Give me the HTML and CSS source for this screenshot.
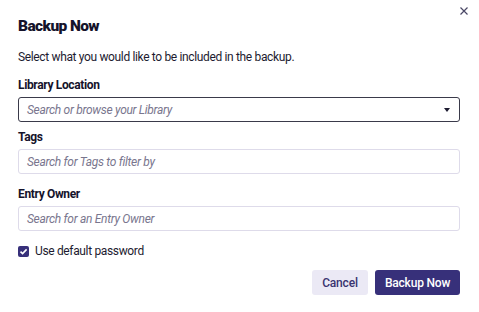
FILE: index.html
```html
<!DOCTYPE html>
<html>
<head>
<meta charset="utf-8">
<link rel="stylesheet" href="styles.css">
</head>
<body>
<div class="dialog">
  <button class="close" aria-label="Close">
    <svg width="8" height="8" viewBox="0 0 8 8"><path d="M0.5 0.5 L7.5 7.5 M7.5 0.5 L0.5 7.5" stroke="#4a4866" stroke-width="1.2"/></svg>
  </button>
  <h2 class="title">Backup Now</h2>
  <p class="desc">Select what you would like to be included in the backup.</p>

  <label class="label lbl-first">Library Location</label>
  <div class="field field-select">
    <span class="ph">Search or browse your Library</span>
    <span class="caret"></span>
  </div>

  <label class="label lbl-tags">Tags</label>
  <div class="field">
    <span class="ph">Search for Tags to filter by</span>
  </div>

  <label class="label lbl-owner">Entry Owner</label>
  <div class="field">
    <span class="ph">Search for an Entry Owner</span>
  </div>

  <div class="check-row">
    <span class="checkbox">
      <svg width="11" height="11" viewBox="0 0 11 11"><path d="M2.5 5.6 L4.6 7.6 L8.6 3.4" fill="none" stroke="#fff" stroke-width="1.6"/></svg>
    </span>
    <span class="check-text">Use default password</span>
  </div>

  <div class="actions">
    <button class="btn btn-cancel">Cancel</button>
    <button class="btn btn-primary">Backup Now</button>
  </div>
</div>
</body>
</html>
```
FILE: styles.css
```css
* { box-sizing: border-box; }
html, body { margin: 0; padding: 0; background: #fff; }
body {
  font-family: Roboto, "Noto Sans", sans-serif;
  color: #1d1b30;
  width: 479px;
  height: 312px;
  overflow: hidden;
  letter-spacing: -0.35px;
}
.dialog {
  position: relative;
  padding: 16px 19px 0 18px;
  display: flex;
  flex-direction: column;
}
.close {
  position: absolute;
  top: 4px;
  right: 8px;
  width: 14px;
  height: 14px;
  padding: 0;
  border: 0;
  background: none;
  display: flex;
  align-items: center;
  justify-content: center;
}
.title {
  margin: 0;
  font-size: 15.5px;
  line-height: 20px;
  font-weight: 900;
  letter-spacing: -0.6px;
  color: #15132b;
}
.desc {
  margin: 12px 0 0;
  font-size: 12px;
  line-height: 18px;
}
.label {
  display: block;
  font-size: 12px;
  line-height: 16px;
  font-weight: 700;
  color: #15132b;
}
.lbl-first { margin-top: 11px; }
.lbl-tags { margin-top: 7px; }
.lbl-owner { margin-top: 12px; }
.field {
  margin-top: 4px;
  height: 25px;
  border: 1px solid #dedbea;
  border-radius: 3px;
  display: flex;
  align-items: center;
  padding: 0 8px;
}
.field-select {
  border-color: #3a3a4a;
  justify-content: space-between;
  padding-right: 9px;
}
.ph {
  font-size: 12px;
  font-style: italic;
  letter-spacing: -0.3px;
  color: #79768e;
}
.caret {
  width: 0;
  height: 0;
  border-left: 3px solid transparent;
  border-right: 3px solid transparent;
  border-top: 4px solid #1d1b30;
}
.check-row {
  margin-top: 13px;
  display: flex;
  align-items: center;
  gap: 6px;
}
.checkbox {
  width: 11px;
  height: 11px;
  border-radius: 2px;
  background: #37307a;
  display: flex;
}
.check-text {
  font-size: 12px;
  line-height: 14px;
}
.actions {
  margin-top: 12px;
  display: flex;
  justify-content: flex-end;
  gap: 7px;
}
.btn {
  height: 25px;
  border: 0;
  border-radius: 3px;
  font-family: Roboto, "Noto Sans", sans-serif;
  font-size: 12px;
  font-weight: 500;
  letter-spacing: -0.2px;
  padding: 0;
  white-space: nowrap;
}
.btn-cancel {
  width: 56px;
  background: #ebe9f5;
  color: #3a3470;
}
.btn-primary {
  width: 85px;
  background: #37307a;
  color: #fff;
}
```
